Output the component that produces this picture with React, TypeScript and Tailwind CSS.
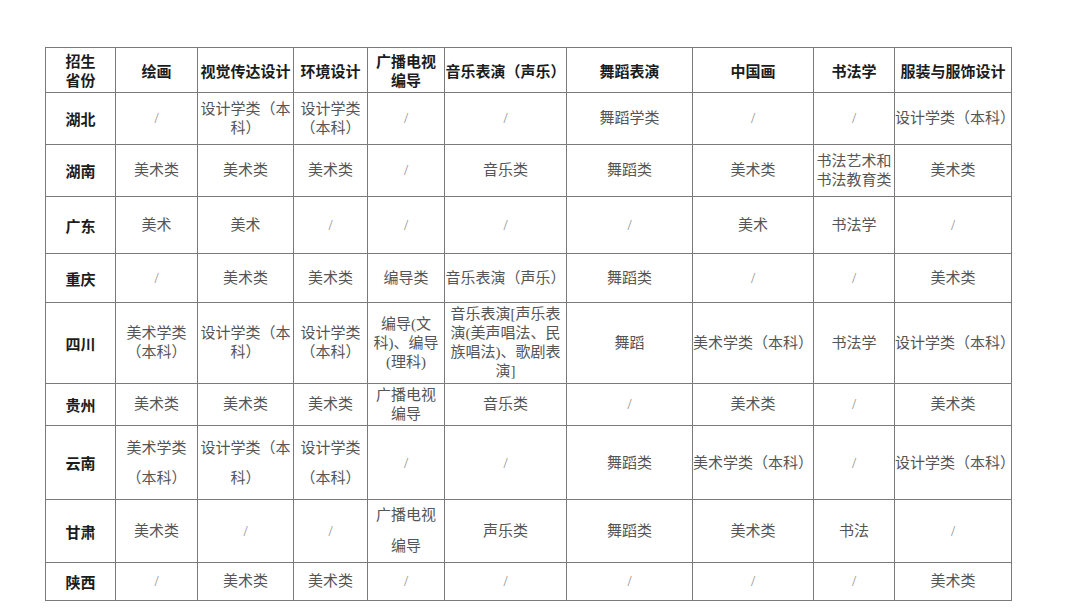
import React from "react";

const headers: React.ReactNode[] = [
  <>招生<br />省份</>,
  "绘画",
  "视觉传达设计",
  "环境设计",
  <>广播电视<br />编导</>,
  "音乐表演（声乐）",
  "舞蹈表演",
  "中国画",
  "书法学",
  "服装与服饰设计",
];

const widths = [70, 82, 96, 74, 77, 122, 126, 121, 81, 117];

type Row = { name: string; h: string; lh: string; cells: React.ReactNode[] };

const rows: Row[] = [
  {
    name: "湖北",
    h: "h-[52px]",
    lh: "leading-[19px]",
    cells: ["/", <>设计学类（本<br />科）</>, <>设计学类<br />（本科）</>, "/", "/", "舞蹈学类", "/", "/", "设计学类（本科）"],
  },
  {
    name: "湖南",
    h: "h-[52px]",
    lh: "leading-[19px]",
    cells: ["美术类", "美术类", "美术类", "/", "音乐类", "舞蹈类", "美术类", <>书法艺术和<br />书法教育类</>, "美术类"],
  },
  {
    name: "广东",
    h: "h-[57px]",
    lh: "leading-[19px]",
    cells: ["美术", "美术", "/", "/", "/", "/", "美术", "书法学", "/"],
  },
  {
    name: "重庆",
    h: "h-[49px]",
    lh: "leading-[19px]",
    cells: ["/", "美术类", "美术类", "编导类", "音乐表演（声乐）", "舞蹈类", "/", "/", "美术类"],
  },
  {
    name: "四川",
    h: "h-[81px]",
    lh: "leading-[19px]",
    cells: [
      <>美术学类<br />（本科）</>,
      <>设计学类（本<br />科）</>,
      <>设计学类<br />（本科）</>,
      <>编导(文<br />科)、编导<br />(理科)</>,
      <>音乐表演[声乐表<br />演(美声唱法、民<br />族唱法)、歌剧表<br />演]</>,
      "舞蹈",
      "美术学类（本科）",
      "书法学",
      "设计学类（本科）",
    ],
  },
  {
    name: "贵州",
    h: "h-[42px]",
    lh: "leading-[19px]",
    cells: ["美术类", "美术类", "美术类", <>广播电视<br />编导</>, "音乐类", "/", "美术类", "/", "美术类"],
  },
  {
    name: "云南",
    h: "h-[74px]",
    lh: "leading-[30px]",
    cells: [
      <>美术学类<br />（本科）</>,
      <>设计学类（本<br />科）</>,
      <>设计学类<br />（本科）</>,
      "/",
      "/",
      "舞蹈类",
      "美术学类（本科）",
      "/",
      "设计学类（本科）",
    ],
  },
  {
    name: "甘肃",
    h: "h-[61px]",
    lh: "leading-[31px]",
    cells: ["美术类", "/", "/", <>广播电视<br />编导</>, "声乐类", "舞蹈类", "美术类", "书法", "/"],
  },
  {
    name: "陕西",
    h: "h-[38px]",
    lh: "leading-[19px]",
    cells: ["/", "美术类", "美术类", "/", "/", "/", "/", "/", "美术类"],
  },
];

export default function App() {
  return (
    <div className="w-[1080px] h-[616px] bg-white overflow-hidden pl-[45px] pt-[47px]">
      <table className="table-fixed border-collapse w-[967px]">
        <colgroup>
          {widths.map((w, i) => (
            <col key={i} style={{ width: w }} />
          ))}
        </colgroup>
        <thead>
          <tr className="h-[45px]">
            {headers.map((h, i) => (
              <th
                key={i}
                className="border border-[#7a7a7a] p-0 text-center align-middle whitespace-nowrap text-[15px] leading-[19px] font-bold text-[#1c1c1c] font-['Noto_Sans_CJK_SC',sans-serif]"
              >
                {h}
              </th>
            ))}
          </tr>
        </thead>
        <tbody>
          {rows.map((r) => (
            <tr key={r.name} className={r.h}>
              <td className="border border-[#7a7a7a] p-0 text-center align-middle whitespace-nowrap text-[15px] leading-[19px] font-bold text-[#1c1c1c] font-['Noto_Sans_CJK_SC',sans-serif]">
                {r.name}
              </td>
              {r.cells.map((c, i) => (
                <td
                  key={i}
                  className={`border border-[#7a7a7a] p-0 text-center align-middle whitespace-nowrap text-[15px] ${r.lh} text-[#555555] font-['Liberation_Serif','Noto_Sans_CJK_SC',serif]`}
                >
                  {c === "/" ? <span className="text-[#8a8a8a]">/</span> : c}
                </td>
              ))}
            </tr>
          ))}
        </tbody>
      </table>
    </div>
  );
}
